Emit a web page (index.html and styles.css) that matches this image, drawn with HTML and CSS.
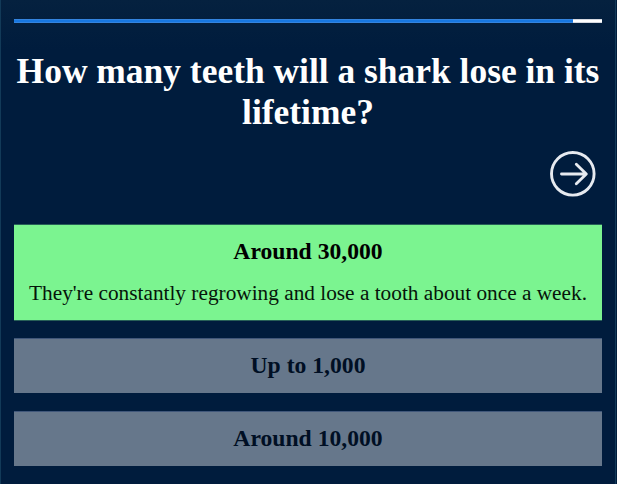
FILE: index.html
```html
<!DOCTYPE html>
<html lang="en">
<head>
<meta charset="utf-8">
<title>Shark quiz</title>
<link rel="stylesheet" href="styles.css">
</head>
<body>
<main class="quiz">
  <div class="progress"><div class="progress-fill"></div></div>
  <h1 class="question">How many teeth will a shark lose in its lifetime?</h1>
  <div class="controls">
    <button class="next" aria-label="Next question">
      <svg viewBox="0 0 46 46" width="46" height="46" fill="none" stroke="currentColor" stroke-width="2.9" stroke-linecap="round" stroke-linejoin="round">
        <circle cx="22.8" cy="22.8" r="21.3"/>
        <path d="M11.5 23H36M26.3 13.3L36.3 23L26.3 32.7"/>
      </svg>
    </button>
  </div>
  <div class="answers">
    <section class="answer correct">
      <h2>Around 30,000</h2>
      <p>They're constantly regrowing and lose a tooth about once a week.</p>
    </section>
    <section class="answer"><h2>Up to 1,000</h2></section>
    <section class="answer"><h2>Around 10,000</h2></section>
  </div>
</main>
</body>
</html>
```
FILE: styles.css
```css
* { box-sizing: border-box; }
body {
  margin: 0;
  background: #001c3d;
  font-family: "Liberation Serif", "Times New Roman", serif;
}
.quiz {
  width: 616px;
  height: 484px;
  padding: 19px 13px 0;
  border: solid #123a58;
  border-width: 0 1px;
  background: linear-gradient(#05213f, #001c3d 50px);
}
.progress { height: 4px; background: #fff; border: solid #d5d8df; border-width: 1px 0; }
.progress-fill { width: 95%; height: 4px; margin-top: -1px; background: #1877e0; border: solid #3484de; border-width: 1px 0; position: relative; top: -1px; margin-top: 0; }
.question {
  margin: 28px -8px 0;
  color: #fff;
  font-size: 35.45px;
  line-height: 41px;
  text-align: center;
}
.controls { display: flex; justify-content: flex-end; margin-top: 18px; padding-right: 6px; }
.next { display: block; padding: 0; border: 0; background: none; color: #e6eaf0; }
.next svg { display: block; }
.answers { display: flex; flex-direction: column; gap: 18px; margin-top: 27px; }
.answer {
  height: 55px;
  padding-top: 13px;
  border-top: 1px solid #40577a;
  background: #66778b;
  color: #000f24;
  text-align: center;
}
.answer h2 { margin: 0; font-size: 23.65px; line-height: 27px; }
.correct { height: 97px; margin-bottom: -1px; border: solid #276057; border-width: 1px 0; background: #7bf490; color: #000; }
.correct p { margin: 16px 0 0; color: #06150a; font-size: 21.3px; line-height: 25px; white-space: nowrap; }
```
